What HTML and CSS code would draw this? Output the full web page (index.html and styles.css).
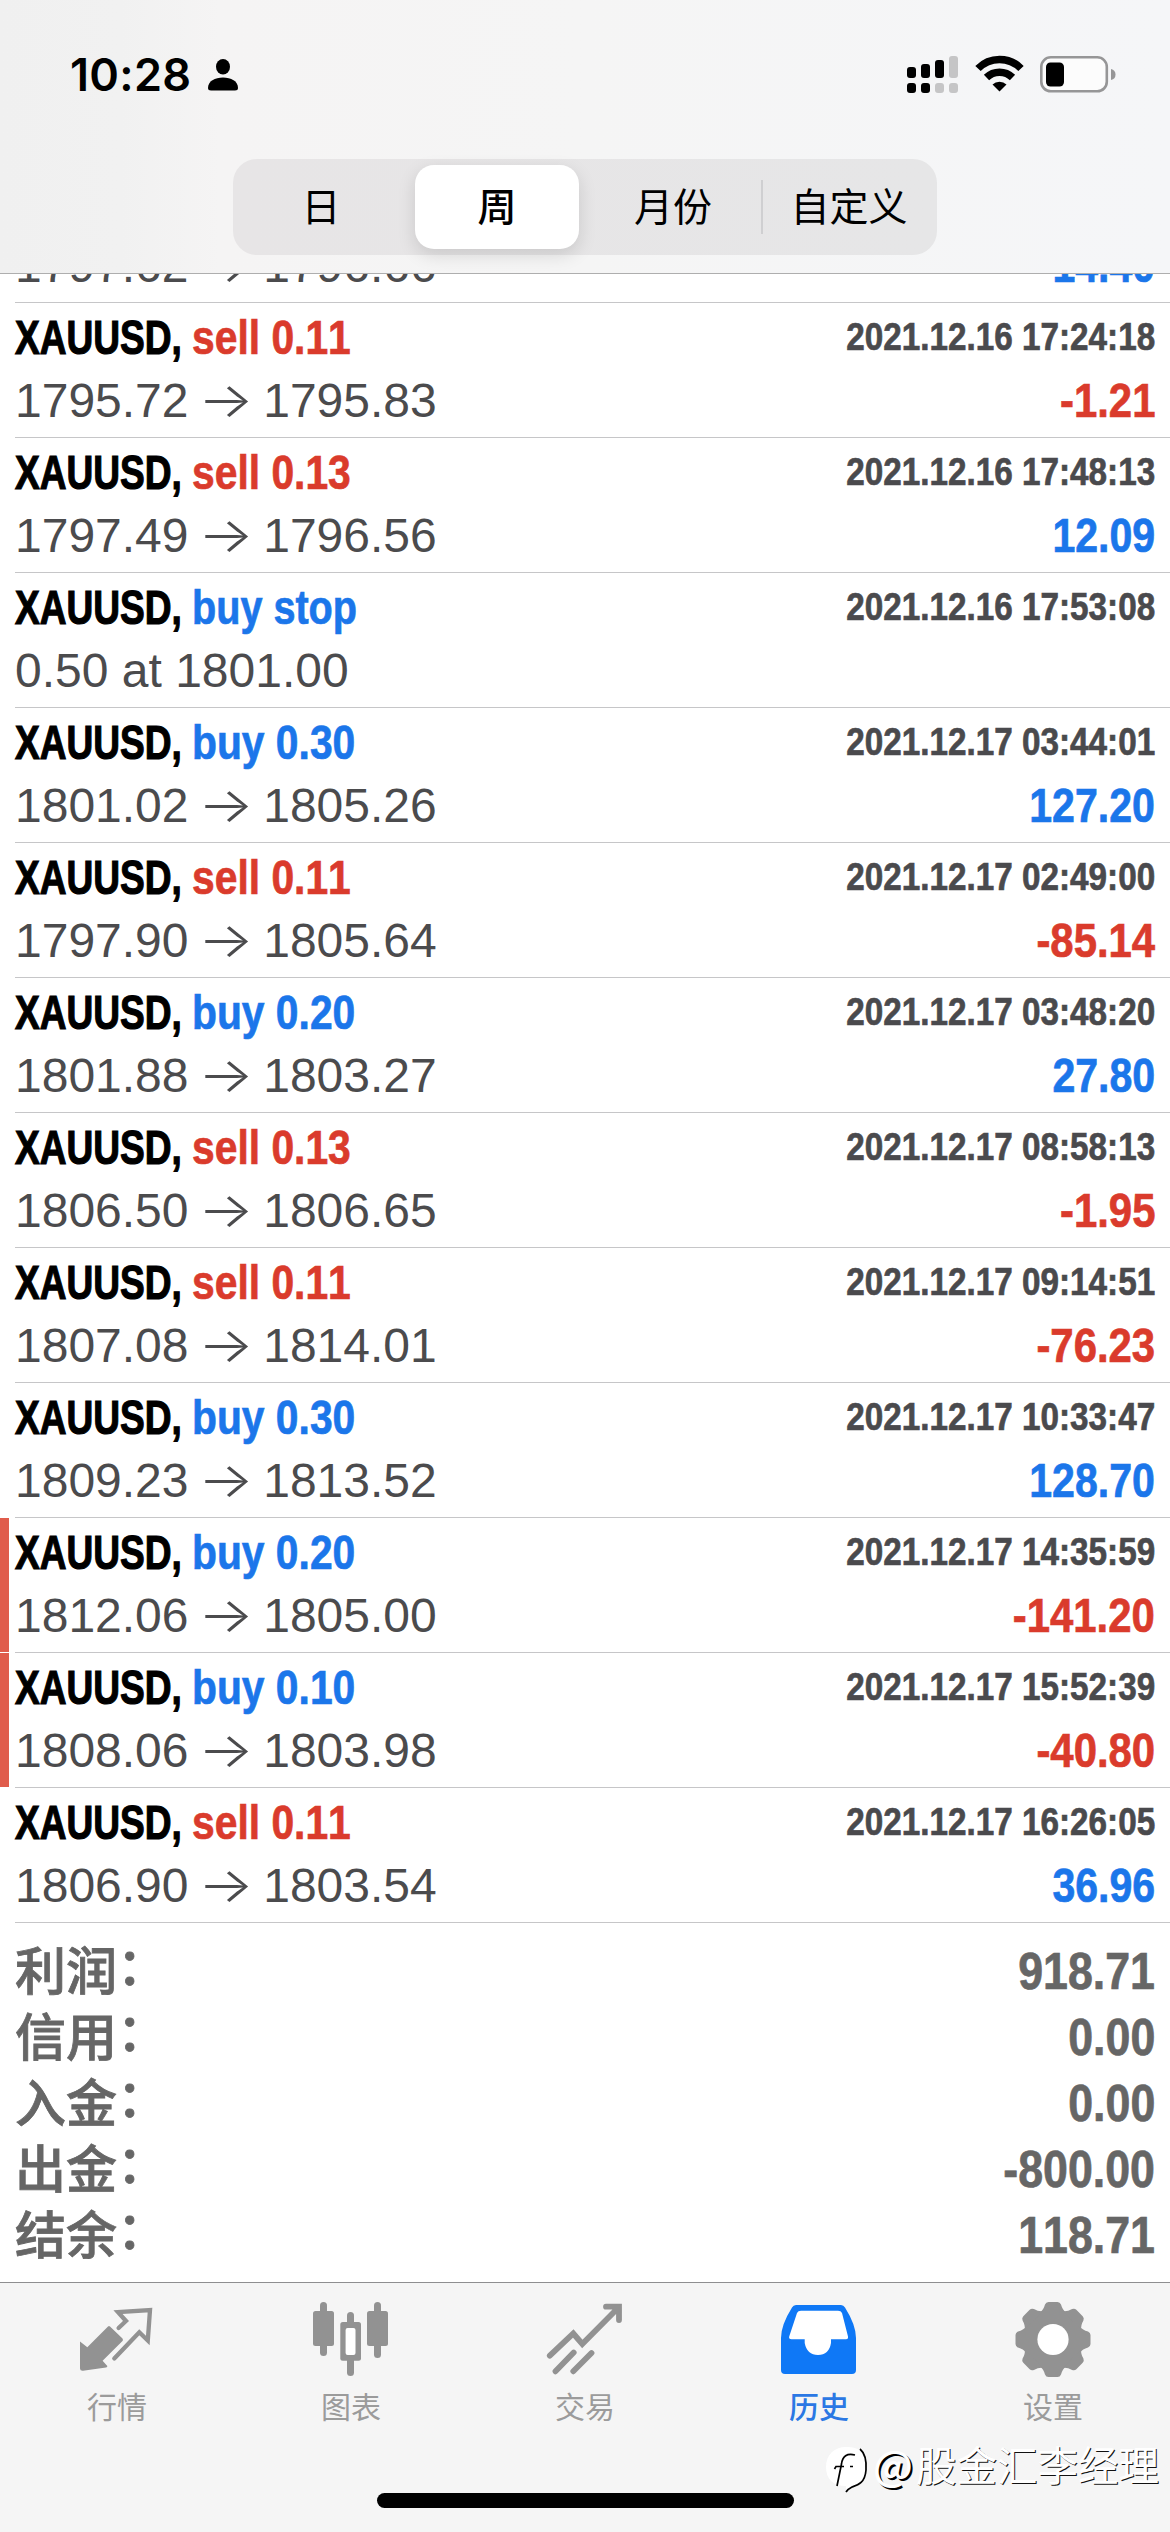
FILE: index.html
```html
<!DOCTYPE html>
<html lang="zh-CN">
<head>
<meta charset="utf-8">
<title>历史</title>
<link rel="stylesheet" href="styles.css">
</head>
<body>
<div class="screen">
  <header class="header">
    <div class="status">
      <span class="clock">10:28</span>
      <svg class="person" width="30" height="32" viewBox="0 0 30 32"><ellipse cx="15" cy="7.7" rx="7" ry="7.7"/><path d="M0 29C0 22 7 18.500 15 18.500S30 22 30 29Q30 31.500 27 31.500H3Q0 31.500 0 29Z"/></svg>
      <span class="spacer"></span>
      <svg class="signal" width="51" height="38" viewBox="0 0 51 38"><g><rect x="0" y="11" width="9" height="11" rx="3"/><rect x="14" y="8" width="9" height="14" rx="3"/><rect x="28" y="4" width="9" height="18" rx="3"/><rect x="0" y="27" width="9" height="10" rx="3"/><rect x="14" y="27" width="9" height="10" rx="3"/></g><g fill="#c5c5c6"><rect x="42" y="0" width="9" height="22" rx="3"/><rect x="28" y="27" width="9" height="10" rx="3"/><rect x="42" y="27" width="9" height="10" rx="3"/></g></svg>
      <svg class="wifi" width="49" height="37" viewBox="0 0 49 37"><path d="M3 13.500A30 30 0 0 1 46 13.500M11.500 22.500A18.500 18.500 0 0 1 37.500 22.500" fill="none" stroke="#000" stroke-width="7.500"/><path d="M17.500 29.500A10 10 0 0 1 31.500 29.500L24.500 36.500Z"/></svg>
      <svg class="battery" width="76" height="37" viewBox="0 0 76 37"><rect x="1.300" y="1.300" width="65.500" height="34" rx="9.500" fill="#fcfcfc" stroke="#969697" stroke-width="2.600"/><rect x="6" y="6.500" width="18" height="24" rx="4.500"/><path d="M71 13Q75.500 14 75.500 18.500T71 24Z" fill="#969697"/></svg>
    </div>
    <nav class="segments">
      <span class="segment">日</span>
      <span class="segment active">周</span>
      <span class="segment">月份</span>
      <span class="segment divided">自定义</span>
    </nav>
  </header>

  <main class="list">
    <article class="row first"><div class="deal"><div class="line"><span class="price">1797.62 <i class="arrow">→</i> 1796.66</span><span class="profit up">14.40</span></div></div></article>
    <article class="row"><div class="deal"><div class="line"><span class="symbol">XAUUSD,</span><span class="action sell">sell 0.11</span><time class="date">2021.12.16 17:24:18</time></div><div class="line"><span class="price">1795.72 <i class="arrow">→</i> 1795.83</span><span class="profit down">-1.21</span></div></div></article>
    <article class="row"><div class="deal"><div class="line"><span class="symbol">XAUUSD,</span><span class="action sell">sell 0.13</span><time class="date">2021.12.16 17:48:13</time></div><div class="line"><span class="price">1797.49 <i class="arrow">→</i> 1796.56</span><span class="profit up">12.09</span></div></div></article>
    <article class="row"><div class="deal"><div class="line"><span class="symbol">XAUUSD,</span><span class="action buy pending">buy stop</span><time class="date">2021.12.16 17:53:08</time></div><div class="line"><span class="price">0.50 at 1801.00</span></div></div></article>
    <article class="row"><div class="deal"><div class="line"><span class="symbol">XAUUSD,</span><span class="action buy">buy 0.30</span><time class="date">2021.12.17 03:44:01</time></div><div class="line"><span class="price">1801.02 <i class="arrow">→</i> 1805.26</span><span class="profit up">127.20</span></div></div></article>
    <article class="row"><div class="deal"><div class="line"><span class="symbol">XAUUSD,</span><span class="action sell">sell 0.11</span><time class="date">2021.12.17 02:49:00</time></div><div class="line"><span class="price">1797.90 <i class="arrow">→</i> 1805.64</span><span class="profit down">-85.14</span></div></div></article>
    <article class="row"><div class="deal"><div class="line"><span class="symbol">XAUUSD,</span><span class="action buy">buy 0.20</span><time class="date">2021.12.17 03:48:20</time></div><div class="line"><span class="price">1801.88 <i class="arrow">→</i> 1803.27</span><span class="profit up">27.80</span></div></div></article>
    <article class="row"><div class="deal"><div class="line"><span class="symbol">XAUUSD,</span><span class="action sell">sell 0.13</span><time class="date">2021.12.17 08:58:13</time></div><div class="line"><span class="price">1806.50 <i class="arrow">→</i> 1806.65</span><span class="profit down">-1.95</span></div></div></article>
    <article class="row"><div class="deal"><div class="line"><span class="symbol">XAUUSD,</span><span class="action sell">sell 0.11</span><time class="date">2021.12.17 09:14:51</time></div><div class="line"><span class="price">1807.08 <i class="arrow">→</i> 1814.01</span><span class="profit down">-76.23</span></div></div></article>
    <article class="row"><div class="deal"><div class="line"><span class="symbol">XAUUSD,</span><span class="action buy">buy 0.30</span><time class="date">2021.12.17 10:33:47</time></div><div class="line"><span class="price">1809.23 <i class="arrow">→</i> 1813.52</span><span class="profit up">128.70</span></div></div></article>
    <article class="row stopped"><div class="deal"><div class="line"><span class="symbol">XAUUSD,</span><span class="action buy">buy 0.20</span><time class="date">2021.12.17 14:35:59</time></div><div class="line"><span class="price">1812.06 <i class="arrow">→</i> 1805.00</span><span class="profit down">-141.20</span></div></div></article>
    <article class="row stopped"><div class="deal"><div class="line"><span class="symbol">XAUUSD,</span><span class="action buy">buy 0.10</span><time class="date">2021.12.17 15:52:39</time></div><div class="line"><span class="price">1808.06 <i class="arrow">→</i> 1803.98</span><span class="profit down">-40.80</span></div></div></article>
    <article class="row"><div class="deal"><div class="line"><span class="symbol">XAUUSD,</span><span class="action sell">sell 0.11</span><time class="date">2021.12.17 16:26:05</time></div><div class="line"><span class="price">1806.90 <i class="arrow">→</i> 1803.54</span><span class="profit up">36.96</span></div></div></article>

    <dl class="summary">
      <div class="total"><dt>利润<span class="colon">：</span></dt><dd>918.71</dd></div>
      <div class="total"><dt>信用<span class="colon">：</span></dt><dd>0.00</dd></div>
      <div class="total"><dt>入金<span class="colon">：</span></dt><dd>0.00</dd></div>
      <div class="total"><dt>出金<span class="colon">：</span></dt><dd>-800.00</dd></div>
      <div class="total"><dt>结余<span class="colon">：</span></dt><dd>118.71</dd></div>
    </dl>
  </main>

  <footer class="tabbar">
    <a class="tab">
      <svg width="80" height="80" viewBox="77 28 80 80"><path d="M80 71.500L87.300 77.300L108 56.500Q109 55.500 110 56.500L122.500 68.500Q123.500 70 122.500 71L102.600 90.700L107.300 96Q107.500 97.300 106 97.500L83 100.800Q80 101 80 98.500Z" fill="#929292"/><path d="M118.600 58L126 51L118 42.200L150 40L147.800 70.500L139.300 62.300L114.300 88.500" fill="none" stroke="#929292" stroke-width="4.300" stroke-linecap="round"/></svg>
      <span>行情</span>
    </a>
    <a class="tab">
      <svg width="80" height="80" viewBox="311 28 80 80" fill="#929292"><rect x="313" y="41" width="21" height="35" rx="2.500"/><rect x="320" y="32" width="7" height="54" rx="3.500"/><rect x="347" y="42" width="7" height="64" rx="3.500"/><rect x="340.300" y="52" width="20.700" height="38.700" rx="2.500"/><rect x="345.600" y="58" width="9.900" height="27" rx="2" fill="#fff"/><rect x="367" y="41" width="21" height="35" rx="2.500"/><rect x="374" y="32" width="7" height="56" rx="3.500"/></svg>
      <span>图表</span>
    </a>
    <a class="tab">
      <svg width="80" height="80" viewBox="545 28 80 80" fill="none" stroke="#929292" stroke-width="5.800" stroke-linecap="round"><path d="M549.800 85.700L573.300 63.500L582.300 74L618 38M606 36.700H619V50M555.500 101.300L573.700 82.500M573.300 101.300L591.500 83"/></svg>
      <span>交易</span>
    </a>
    <a class="tab selected">
      <svg width="80" height="80" viewBox="779 28 80 80"><path d="M796 35H841Q843.600 35 845 37.500Q856 55 856 68V100Q856 104 852 104H785Q781 104 781 100V68Q781 55 792 37.500Q793.300 35 796 35Z" fill="#0f78f6"/><path d="M801 40.800H838Q841 40.800 842 43L848 66.500Q848.500 69.300 846 69.300H831V73Q829 85 818 85T804.700 73V69.300H791.500Q788.500 69.300 789.200 66.500L797 43Q798 40.800 801 40.800Z" fill="#fff"/></svg>
      <span>历史</span>
    </a>
    <a class="tab">
      <svg width="80" height="80" viewBox="1013 28 80 80" fill="#929292"><defs><path id="tooth" d="M1040 42.500Q1043.500 40 1045 34.500Q1046 32 1048.500 32H1057.500Q1060 32 1061 34.500Q1062.500 40 1066 42.500Z"/></defs><circle cx="1053" cy="69.500" r="30"/><use href="#tooth"/><use href="#tooth" transform="rotate(45 1053 69.500)"/><use href="#tooth" transform="rotate(90 1053 69.500)"/><use href="#tooth" transform="rotate(135 1053 69.500)"/><use href="#tooth" transform="rotate(180 1053 69.500)"/><use href="#tooth" transform="rotate(225 1053 69.500)"/><use href="#tooth" transform="rotate(270 1053 69.500)"/><use href="#tooth" transform="rotate(315 1053 69.500)"/><circle cx="1053" cy="69.500" r="15.600" fill="#fff"/></svg>
      <span>设置</span>
    </a>
  </footer>

  <div class="home-indicator"></div>
  <div class="watermark">
    <svg width="44" height="48" viewBox="0 0 44 48"><path d="M21 1C34 1 42 6 41 23C40 38 33 39 27 41Q23 43 21 46V40C8 40 1 33 1 21S9 1 21 1Z" fill="#fff"/><path d="M30 9Q18 6 16.500 18L12 40M9.500 23L11 20.500H19M25 20.500H28M35 3Q42 9 41 24C40 37 33 39 27 41Q23 43 21 46" fill="none" stroke="#000" stroke-width="1.700"/></svg>
    <span><b class="at">@</b>股金汇李经理</span>
  </div>
</div>
</body>
</html>
```
FILE: styles.css
```css
* { box-sizing: border-box; }

body {
  margin: 0;
  background: #fff;
  font-family: "Liberation Sans", "Noto Sans CJK SC", sans-serif;
  font-kerning: none;
}

.screen {
  position: relative;
  display: flex;
  flex-direction: column;
  width: 1170px;
  height: 2532px;
  overflow: hidden;
  background: #fff;
}

/* Header: status bar and period switch */
.header {
  flex: none;
  height: 274px;
  border-bottom: 1px solid #aeaeae;
  background: linear-gradient(90deg, #f0f0f0 0, #f1f1f1 120px, #f5f4f4 220px, #f5f5f5 50%, #f5f6f8 100%);
}

.status {
  display: flex;
  align-items: flex-start;
  height: 159px;
  padding: 55px 54px 0 70px;
}

.clock {
  width: 138px;
  font: 600 45px/40px Inter, sans-serif;
  letter-spacing: 0.3px;
}

.person { margin-top: 4px; }
.spacer { flex: 1; }
.signal { margin: 1px 17px 0 0; }
.wifi { margin-right: 16px; }
.battery { margin-top: 1px; }

.segments {
  display: grid;
  grid-template-columns: repeat(4, 1fr);
  width: 704px;
  height: 96px;
  margin: 0 auto;
  border-radius: 24px;
  background: linear-gradient(90deg, #e7e5e6, #e6e6e7);
}

.segment {
  position: relative;
  display: flex;
  align-items: center;
  justify-content: center;
  margin: 6px;
  padding-bottom: 5px;
  font: 400 39px/79px "Noto Sans CJK SC", sans-serif;
}

.segment.active {
  border-radius: 19px;
  background: #fff;
  font-weight: 500;
  box-shadow: 0 6px 18px rgba(0, 0, 0, 0.13);
}

.segment.divided::before {
  content: "";
  position: absolute;
  left: -6px;
  top: 15px;
  width: 2px;
  height: 54px;
  background: #cfcfd1;
}

/* Deals */
.list {
  flex: 1;
  overflow: hidden;
}

.row {
  display: grid;
  grid-template-columns: 9px 1fr;
  column-gap: 6px;
  height: 135px;
}

.row::before {
  content: "";
  height: 134px;
}

.row.stopped::before { background: #e05c4c; }

/* Row scrolled partly under the header */
.row.first {
  height: 29px;
  overflow: hidden;
}

.row.first .deal {
  display: flex;
  flex-direction: column;
  justify-content: flex-end;
  height: 29px;
  padding: 0 15px 5px 0;
}

.row.first .line { flex: none; }

.deal {
  padding: 3px 15px 0 0;
  border-bottom: 1px solid #c6c6c8;
}

.line {
  display: flex;
  height: 63px;
  font-size: 48px;
  line-height: 63px;
  white-space: nowrap;
}

.symbol, .action, .date, .profit, dd { font-weight: 700; }

.action, .date, .profit, dd { -webkit-text-stroke: 0.7px currentColor; }

/* Condensed faces: narrowed glyphs in boxes of the final width */
.symbol {
  width: 177px;
  transform: scaleX(0.772);
  transform-origin: left;
  -webkit-text-stroke: 1.2px #000;
}

.action {
  width: 170px;
  transform: scaleX(0.85);
  transform-origin: left;
}

.action.pending { transform: scaleX(0.825); }

.date {
  margin-left: auto;
  color: #4a4a4d;
  font-size: 39px;
  line-height: 61px;
  transform: scaleX(0.853);
  transform-origin: right;
}

.price { color: #4b4b4d; }

.arrow {
  display: inline-block;
  width: 48px;
  font: 300 48px/50px Inter, sans-serif;
  text-align: center;
  transform: scaleX(1.22);
}

.profit {
  margin-left: auto;
  transform: scaleX(0.855);
  transform-origin: right;
}

.profit.down { transform: scaleX(0.872); }

.buy, .up { color: #1b76ea; }
.sell, .down { color: #da3b2c; }

/* Totals */
.summary {
  margin: 0;
  padding: 16px 15px 0;
}

.total {
  display: flex;
  justify-content: space-between;
  height: 66px;
  color: #666;
  font-size: 51px;
  line-height: 66px;
}

dt {
  padding-top: 1px;
  font-weight: 500;
  -webkit-text-stroke: 0.8px currentColor;
}

.colon {
  position: relative;
  top: -5px;
}

dd {
  margin: 0;
  transform: scaleX(0.877);
  transform-origin: right;
}

/* Tab bar */
.tabbar {
  display: grid;
  grid-template-columns: repeat(5, 1fr);
  flex: none;
  height: 250px;
  border-top: 1px solid #8e8e90;
  background: #f5f5f5;
}

.tab {
  display: flex;
  flex-direction: column;
  align-items: center;
  padding-top: 15px;
  color: #9b9b9b;
  font: 400 30px/44px "Noto Sans CJK SC", sans-serif;
}

.tab span { margin-top: 5px; }
.tab.selected { color: #2b78e4; font-weight: 500; }

.home-indicator {
  position: absolute;
  left: 377px;
  top: 2493px;
  width: 417px;
  height: 15px;
  border-radius: 8px;
  background: #000;
}

.watermark {
  position: absolute;
  left: 825px;
  top: 2444px;
  display: flex;
  gap: 4px;
  color: #fff;
  font: 400 40.500px/38px "Noto Sans CJK SC", sans-serif;
  text-shadow: 1px 1px 0 #111;
  white-space: nowrap;
}

.watermark svg { margin-top: 2px; }

.at {
  display: inline-block;
  width: 43px;
  font: 500 41px/38px "Noto Sans CJK SC", sans-serif;
  text-shadow: 2px 2px 0 #000;
}
```
